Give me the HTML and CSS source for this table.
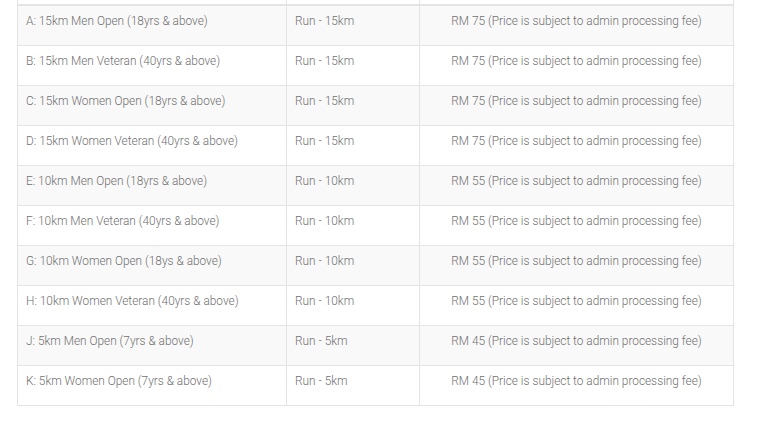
FILE: index.html
```html
<!DOCTYPE html>
<html>
<head>
<meta charset="utf-8">
<link rel="stylesheet" href="styles.css">
</head>
<body>
<div class="wrap">
<table class="price-table">
<colgroup>
<col class="c1"><col class="c2"><col class="c3">
</colgroup>
<thead>
<tr><th></th><th></th><th></th></tr>
</thead>
<tbody>
<tr><td>A: 15km Men Open (18yrs &amp; above)</td><td>Run - 15km</td><td class="price">RM 75 (Price is subject to admin processing fee)</td></tr>
<tr><td>B: 15km Men Veteran (40yrs &amp; above)</td><td>Run - 15km</td><td class="price">RM 75 (Price is subject to admin processing fee)</td></tr>
<tr><td>C: 15km Women Open (18yrs &amp; above)</td><td>Run - 15km</td><td class="price">RM 75 (Price is subject to admin processing fee)</td></tr>
<tr><td>D: 15km Women Veteran (40yrs &amp; above)</td><td>Run - 15km</td><td class="price">RM 75 (Price is subject to admin processing fee)</td></tr>
<tr><td>E: 10km Men Open (18yrs &amp; above)</td><td>Run - 10km</td><td class="price">RM 55 (Price is subject to admin processing fee)</td></tr>
<tr><td>F: 10km Men Veteran (40yrs &amp; above)</td><td>Run - 10km</td><td class="price">RM 55 (Price is subject to admin processing fee)</td></tr>
<tr><td>G: 10km Women Open (18ys &amp; above)</td><td>Run - 10km</td><td class="price">RM 55 (Price is subject to admin processing fee)</td></tr>
<tr><td>H: 10km Women Veteran (40yrs &amp; above)</td><td>Run - 10km</td><td class="price">RM 55 (Price is subject to admin processing fee)</td></tr>
<tr><td>J: 5km Men Open (7yrs &amp; above)</td><td>Run - 5km</td><td class="price">RM 45 (Price is subject to admin processing fee)</td></tr>
<tr><td>K: 5km Women Open (7yrs &amp; above)</td><td>Run - 5km</td><td class="price">RM 45 (Price is subject to admin processing fee)</td></tr>
</tbody>
</table>
</div>
</body>
</html>
```
FILE: styles.css
```css
html, body {
  margin: 0;
  padding: 0;
  background: #ffffff;
}
.wrap {
  padding: 0 0 0 17px;
}
.price-table {
  border-collapse: collapse;
  table-layout: fixed;
  width: 716px;
  font-family: Roboto, "Liberation Sans", sans-serif;
  font-size: 11.85px;
  font-weight: 300;
  color: #707070;
}
.c1 { width: 269px; }
.c2 { width: 133px; }
.c3 { width: 314px; }
.price-table th {
  height: 4px;
  padding: 0;
  border: 1px solid #e4e4e4;
  border-top: none;
  border-bottom: 2px solid #e4e4e4;
}
.price-table td {
  border: 1px solid #e4e4e4;
  padding: 5px 8px 13px;
  line-height: 21px;
  vertical-align: top;
  text-align: left;
  white-space: nowrap;
}
.price-table td.price {
  text-align: center;
}
.price-table tbody tr:nth-child(odd) td {
  background: #f9f9f9;
}
```
